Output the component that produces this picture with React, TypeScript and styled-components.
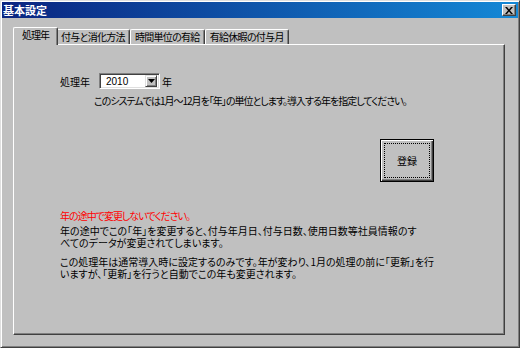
import styled, { createGlobalStyle } from "styled-components";

const GlobalStyle = createGlobalStyle`
  html, body {
    margin: 0;
    padding: 0;
    background: #c0c0c0;
  }
  body {
    font-family: "Noto Sans CJK JP", "Liberation Sans", sans-serif;
    font-size: 10px;
    font-feature-settings: "palt";
    color: #000;
  }
`;

const Window = styled.div`
  width: 520px;
  height: 348px;
  box-sizing: border-box;
  background: #c0c0c0;
  border: 1px solid;
  border-color: #dfdfdf #404040 #404040 #dfdfdf;
  box-shadow: inset 1px 1px #fff, inset -1px -1px #808080;
  padding: 1px;
  display: flex;
  flex-direction: column;
`;

const TitleBar = styled.div`
  height: 16px;
  display: flex;
  align-items: center;
  justify-content: space-between;
  padding: 0 2px 0 1px;
  background: linear-gradient(to right, #0a2480, #1488d6);
`;

const Title = styled.span`
  color: #fff;
  font-weight: bold;
  font-size: 11px;
  line-height: 16px;
`;

const CloseButton = styled.div`
  width: 14px;
  height: 12px;
  box-sizing: border-box;
  background: #c0c0c0;
  border: 1px solid;
  border-color: #fff #404040 #404040 #fff;
  box-shadow: inset -1px -1px #808080;
  display: flex;
  align-items: center;
  justify-content: center;
`;

const Body = styled.div`
  flex: 1;
  display: flex;
  flex-direction: column;
  padding: 9px 13px 11px 11px;
`;

const TabRow = styled.div`
  display: flex;
  align-items: flex-end;
  padding-left: 2px;
  height: 17px;
`;

const Tab = styled.div<{ $active?: boolean }>`
  position: relative;
  box-sizing: border-box;
  height: ${(p) => (p.$active ? "18px" : "15px")};
  margin: ${(p) => (p.$active ? "0 -2px -1px -2px" : "0")};
  padding: ${(p) => (p.$active ? "0 8px" : "0 4px")};
  z-index: ${(p) => (p.$active ? 1 : 0)};
  background: #c0c0c0;
  border-top: 1px solid #fff;
  border-left: 1px solid #fff;
  border-right: 1px solid #404040;
  box-shadow: inset -1px 0 #808080;
  border-radius: 2px 2px 0 0;
  line-height: ${(p) => (p.$active ? "14px" : "13px")};
  letter-spacing: ${(p) => (p.$active ? "-1px" : "-0.7px")};
  white-space: nowrap;
`;

const Panel = styled.div`
  flex: 1;
  box-sizing: border-box;
  border: 1px solid;
  border-color: #fff #404040 #404040 #fff;
  box-shadow: inset -1px -1px #808080;
  display: flex;
  flex-direction: column;
  padding: 28px 0 0 46px;
`;

const YearRow = styled.div`
  display: flex;
  align-items: center;
  height: 16px;
`;

const Label = styled.span`
  width: 39px;
`;

const Combo = styled.div`
  width: 61px;
  height: 16px;
  box-sizing: border-box;
  background: #fff;
  border: 1px solid;
  border-color: #808080 #fff #fff #808080;
  box-shadow: inset 1px 1px #404040, inset -1px -1px #dfdfdf;
  display: flex;
  align-items: center;
  justify-content: space-between;
  padding: 2px 2px 2px 6px;
  margin-right: 2px;
`;

const ComboValue = styled.span`
  font-family: "Liberation Sans", sans-serif;
  font-size: 10px;
`;

const DropButton = styled.div`
  width: 12px;
  height: 12px;
  box-sizing: border-box;
  background: #c0c0c0;
  border: 1px solid;
  border-color: #dfdfdf #404040 #404040 #dfdfdf;
  box-shadow: inset 1px 1px #fff, inset -1px -1px #808080;
  display: flex;
  align-items: center;
  justify-content: center;
`;

const Description = styled.div`
  margin: 6px 0 0 34px;
  line-height: 12px;
  letter-spacing: -1px;
  white-space: nowrap;
`;

const ButtonRow = styled.div`
  display: flex;
  padding-left: 320px;
  margin-top: 32px;
`;

const PushButton = styled.div`
  position: relative;
  width: 54px;
  height: 43px;
  box-sizing: border-box;
  border: 1px solid #000;
  background: #c0c0c0;
  box-shadow: inset 1px 1px #fff, inset -1px -1px #404040, inset -2px -2px #808080;
  display: flex;
  align-items: center;
  justify-content: center;
  &::after {
    content: "";
    position: absolute;
    inset: 3px;
    border: 1px dotted #000;
  }
`;

const Notes = styled.div`
  margin-top: 28px;
  display: flex;
  flex-direction: column;
  gap: 7px;
`;

const Para = styled.p<{ $warn?: boolean }>`
  margin: 0;
  line-height: 12px;
  white-space: nowrap;
  color: ${(p) => (p.$warn ? "#ff0000" : "#000")};
  letter-spacing: ${(p) => (p.$warn ? "-1px" : "0")};
  margin-bottom: ${(p) => (p.$warn ? "-4px" : "0")};
`;

const tabs = ["処理年", "付与と消化方法", "時間単位の有給", "有給休暇の付与月"];

export default function App() {
  return (
    <>
      <GlobalStyle />
      <Window>
        <TitleBar>
          <Title>基本設定</Title>
          <CloseButton>
            <svg width="8" height="7" viewBox="0 0 8 7">
              <path d="M0 0h2l2 2.5L6 0h2L5 3.5 8 7H6L4 4.5 2 7H0l3-3.5z" fill="#000" />
            </svg>
          </CloseButton>
        </TitleBar>
        <Body>
          <TabRow>
            {tabs.map((t, i) => (
              <Tab key={t} $active={i === 0}>
                {t}
              </Tab>
            ))}
          </TabRow>
          <Panel>
            <YearRow>
              <Label>処理年</Label>
              <Combo>
                <ComboValue>2010</ComboValue>
                <DropButton>
                  <svg width="7" height="4" viewBox="0 0 7 4">
                    <path d="M0 0h7L3.5 4z" fill="#000" />
                  </svg>
                </DropButton>
              </Combo>
              <span>年</span>
            </YearRow>
            <Description>
              このシステムでは1月～12月を「年」の単位とします。導入する年を指定してください。
            </Description>
            <ButtonRow>
              <PushButton>登録</PushButton>
            </ButtonRow>
            <Notes>
              <Para $warn>年の途中で変更しないでください。</Para>
              <Para>
                年の途中でこの「年」を変更すると、付与年月日、付与日数、使用日数等社員情報のす
                <br />
                べてのデータが変更されてしまいます。
              </Para>
              <Para>
                この処理年は通常導入時に設定するのみです。年が変わり、1月の処理の前に「更新」を行
                <br />
                いますが、「更新」を行うと自動でこの年も変更されます。
              </Para>
            </Notes>
          </Panel>
        </Body>
      </Window>
    </>
  );
}
